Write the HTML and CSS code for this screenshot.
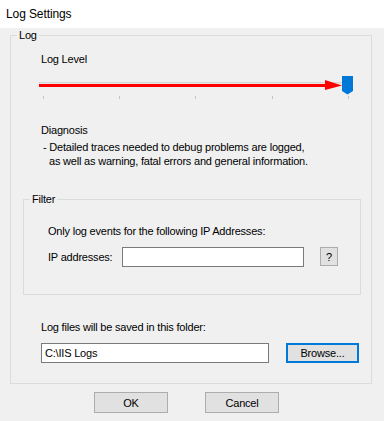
FILE: index.html
```html
<!DOCTYPE html>
<html>
<head>
<meta charset="utf-8">
<link rel="stylesheet" href="styles.css">
</head>
<body>
<div class="window">
  <div class="titlebar">Log Settings</div>
  <fieldset class="group log-group">
    <legend class="legend">Log</legend>
    <div class="label">Log Level</div>
    <svg class="slider" width="322" height="28" viewBox="0 0 322 28">
      <rect x="3.5" y="8.5" width="306" height="3" fill="#e7e7e7" stroke="#d6d6d6"/>
      <g fill="#c4c4c4">
        <rect x="7" y="22" width="1" height="3"/>
        <rect x="83" y="22" width="1" height="3"/>
        <rect x="159" y="22" width="1" height="3"/>
        <rect x="236" y="22" width="1" height="3"/>
        <rect x="312" y="22" width="1" height="3"/>
      </g>
      <rect x="3" y="10" width="288" height="3" fill="#ff0000"/>
      <path d="M289 6 L306 11.5 L289 16 Z" fill="#ff0000"/>
      <path d="M306 2 H317 V17 L311.5 20.5 L306 17 Z" fill="#0078d7"/>
    </svg>
    <div class="label diag-title">Diagnosis</div>
    <div class="desc">
      <div class="desc-line">- Detailed traces needed to debug problems are logged,</div>
      <div class="desc-line cont">as well as warning, fatal errors and general information.</div>
    </div>
    <fieldset class="group filter-group">
      <legend class="legend">Filter</legend>
      <div class="label">Only log events for the following IP Addresses:</div>
      <div class="ip-row">
        <span class="ip-label">IP addresses:</span>
        <div class="textbox ip-box"></div>
        <div class="button help-btn">?</div>
      </div>
    </fieldset>
    <div class="label folder-label">Log files will be saved in this folder:</div>
    <div class="path-row">
      <div class="textbox path-box">C:\IIS Logs</div>
      <div class="button browse-btn">Browse...</div>
    </div>
  </fieldset>
  <div class="footer">
    <div class="button dlg-btn">OK</div>
    <div class="button dlg-btn">Cancel</div>
  </div>
</div>
</body>
</html>
```
FILE: styles.css
```css
* { box-sizing: border-box; }
html, body {
  margin: 0;
  padding: 0;
  background: #f0f0f0;
}
body {
  font-family: "Liberation Sans", Arial, sans-serif;
  font-size: 11px;
  letter-spacing: -0.2px;
  line-height: 14px;
  color: #000;
}
.window {
  width: 384px;
  height: 421px;
  background: #f0f0f0;
  overflow: hidden;
}
.titlebar {
  height: 28px;
  background: #fff;
  padding-left: 6px;
  line-height: 28px;
  font-size: 12px;
  letter-spacing: -0.1px;
}
.group {
  border: 1px solid #dcdcdc;
  margin: 0;
  min-width: 0;
}
.legend {
  padding: 0 2px;
  line-height: 14px;
  height: 14px;
}
.log-group {
  margin: 0 12px 0 10px;
  padding: 10px 10px 20px 12px;
}
.log-group > .legend { margin-left: -6px; }
.log-group > .label,
.log-group > .desc,
.log-group > .path-row {
  margin-left: 18px;
}
.label { height: 14px; white-space: nowrap; }
.slider {
  display: block;
  margin: 8px 0 0 13px;
}
.diag-title { margin-top: 21px; }
.desc { margin-top: 3px; padding-left: 2px; }
.desc-line { height: 14px; white-space: nowrap; }
.desc-line.cont { padding-left: 6px; }
.filter-group {
  margin-top: 24px;
  padding: 18px 10px 27px 24px;
}
.filter-group > .legend { margin-left: -18px; }
.ip-row {
  display: flex;
  align-items: center;
  margin-top: 9px;
  height: 20px;
}
.ip-label { width: 74px; }
.textbox {
  height: 20px;
  background: #fff;
  border: 1px solid #7a7a7a;
  padding: 2px 3px;
  line-height: 14px;
}
.ip-box { width: 182px; }
.button {
  background: #e1e1e1;
  border: 1px solid #adadad;
  display: flex;
  align-items: center;
  justify-content: center;
}
.help-btn {
  width: 18px;
  height: 19px;
  margin-left: 16px;
  margin-top: -1px;
}
.folder-label { margin-top: 25px; }
.path-row {
  display: flex;
  margin-top: 9px;
  height: 20px;
}
.path-box { width: 228px; }
.browse-btn {
  width: 73px;
  height: 20px;
  margin-left: 17px;
  border: 2px solid #0078d7;
}
.footer {
  display: flex;
  gap: 37px;
  padding-left: 94px;
  margin-top: 8px;
}
.dlg-btn {
  width: 74px;
  height: 21px;
}
```
